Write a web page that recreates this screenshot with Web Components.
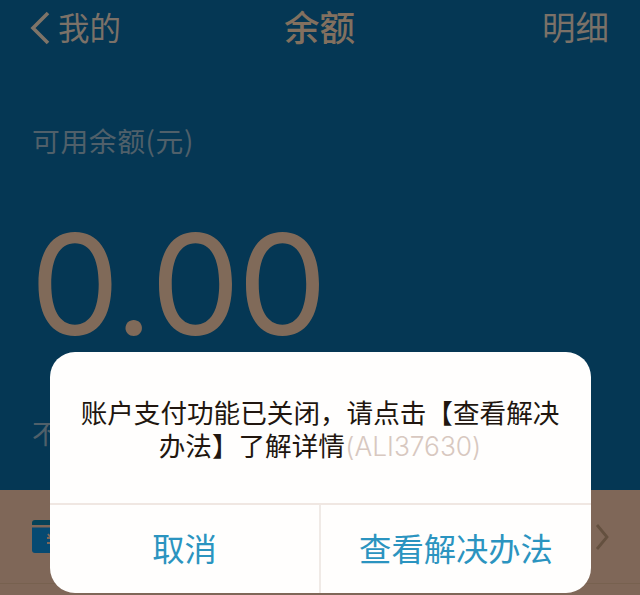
<!DOCTYPE html>
<html lang="zh-CN">
<head>
<meta charset="utf-8">
<title>余额</title>
<style>
html,body{margin:0;height:100%;overflow:hidden}
body{font-family:"Noto Sans CJK SC",sans-serif;background:#7f6758}
</style>
</head>
<body>
<balance-page></balance-page>
<script>
class NavBar extends HTMLElement{
  constructor(){super();this.attachShadow({mode:'open'}).innerHTML=`
<style>
:host{display:grid;grid-template-columns:1fr auto 1fr;height:56px;padding:0 31px 0 30px;color:#7b7168;line-height:52px}
.back{display:flex;gap:8px;font-size:31.5px}
svg{display:block;margin-top:11px}
.title{font-size:35.5px;font-weight:500;color:#82705f;line-height:51px}
.more{text-align:right;font-size:33.5px}
</style>
<div class="back"><svg width="20" height="34" viewBox="0 0 20 34"><path d="M18 2 3 17 18 32" fill="none" stroke="#7f7468" stroke-width="3.6"/></svg><slot name="back"></slot></div>
<div class="title"><slot></slot></div>
<div class="more"><slot name="more"></slot></div>`}
}
customElements.define('nav-bar',NavBar);

class BalanceSummary extends HTMLElement{
  constructor(){super();this.attachShadow({mode:'open'}).innerHTML=`
<style>
:host{display:flex;flex-direction:column;padding:64px 0 0 32px;height:370px;color:#50606a}
.label{font-size:27.8px;line-height:40px;letter-spacing:.6px}
.amount{font-family:Inter,sans-serif;font-size:139.500px;font-weight:400;height:170px;line-height:170px;letter-spacing:-3px;color:#806a59;margin-top:40px;margin-left:-2px;white-space:nowrap;transform:scaleX(1.022);transform-origin:left}
.dot{display:inline-block;width:33px;font-size:122px;letter-spacing:-5px;text-indent:-1px;line-height:1}
.note{font-size:27px;line-height:40px;margin-top:43px}
</style>
<div class="label"><slot></slot></div>
<div class="amount">0<span class="dot">.</span>00</div>
<div class="note"><slot name="note"></slot></div>`}
}
customElements.define('balance-summary',BalanceSummary);

class MenuRow extends HTMLElement{
  constructor(){super();this.attachShadow({mode:'open'}).innerHTML=`
<style>
:host{display:flex;justify-content:space-between;align-items:center;height:93px;padding:0 31px 0 32px;background:#7f6758;border-bottom:1px solid #77614f}
svg{display:block}
</style>
<svg width="44" height="33" viewBox="0 0 44 33"><path d="M0 5V3Q0 0 3 0H41Q44 0 44 3V5Z" fill="#064258"/><path d="M0 7.500H44V30Q44 33 41 33H3Q0 33 0 30Z" fill="#064a72"/><path d="M16 14l3 4 3-4M15 18h8M15 23h8M19 18v10" fill="none" stroke="#7f6758" stroke-width="2"/></svg>
<svg width="14" height="28" viewBox="0 0 14 28"><path d="M2 2 12 14 2 26" fill="none" stroke="#64503f" stroke-width="2.8"/></svg>`}
}
customElements.define('menu-row',MenuRow);

class AlertDialog extends HTMLElement{
  constructor(){super();this.attachShadow({mode:'open'}).innerHTML=`
<style>
:host{position:absolute;left:50px;top:352px;width:541px;height:241px;box-sizing:border-box;display:flex;flex-direction:column;background:#fffefd;border-radius:25px;overflow:hidden;color:#21160f}
.message{box-sizing:border-box;height:151px;padding:44px 1px 0 0;text-align:center;font-size:26.6px;line-height:32.5px;white-space:nowrap;text-autospace:no-autospace}
.actions{flex:1;display:grid;grid-template-columns:269px 1fr;border-top:2px solid #f0e7e2;color:#2b94c0;font-size:32.3px;line-height:84px;text-align:center}
.actions div+div{border-left:2px solid #f0eae6}
</style>
<div class="message"><slot></slot></div>
<div class="actions"><div><slot name="cancel"></slot></div><div><slot name="confirm"></slot></div></div>`}
}
customElements.define('alert-dialog',AlertDialog);

class ErrorCode extends HTMLElement{
  constructor(){super();this.attachShadow({mode:'open'}).innerHTML=`
<style>:host{font-family:Inter,sans-serif;font-weight:300;font-size:26.3px;line-height:1;color:#d8c8c0;margin-left:-7px}</style><slot></slot>`}
}
customElements.define('error-code',ErrorCode);

class BalancePage extends HTMLElement{
  constructor(){super();this.attachShadow({mode:'open'}).innerHTML=`
<style>
:host{display:block;position:relative;width:640px;height:595px;overflow:hidden;background:#7f6758}
.hero{background:#053754;height:490px}
</style>
<div class="hero">
<nav-bar><span slot="back">我的</span>余额<span slot="more">明细</span></nav-bar>
<balance-summary>可用余额(元)<span slot="note">不</span></balance-summary>
</div>
<menu-row></menu-row>
<alert-dialog>账户支付功能已关闭，请点击【查看解决<br>办法】了解详情<error-code>(ALI37630)</error-code><span slot="cancel">取消</span><span slot="confirm">查看解决办法</span></alert-dialog>`}
}
customElements.define('balance-page',BalancePage);
</script>
</body>
</html>
